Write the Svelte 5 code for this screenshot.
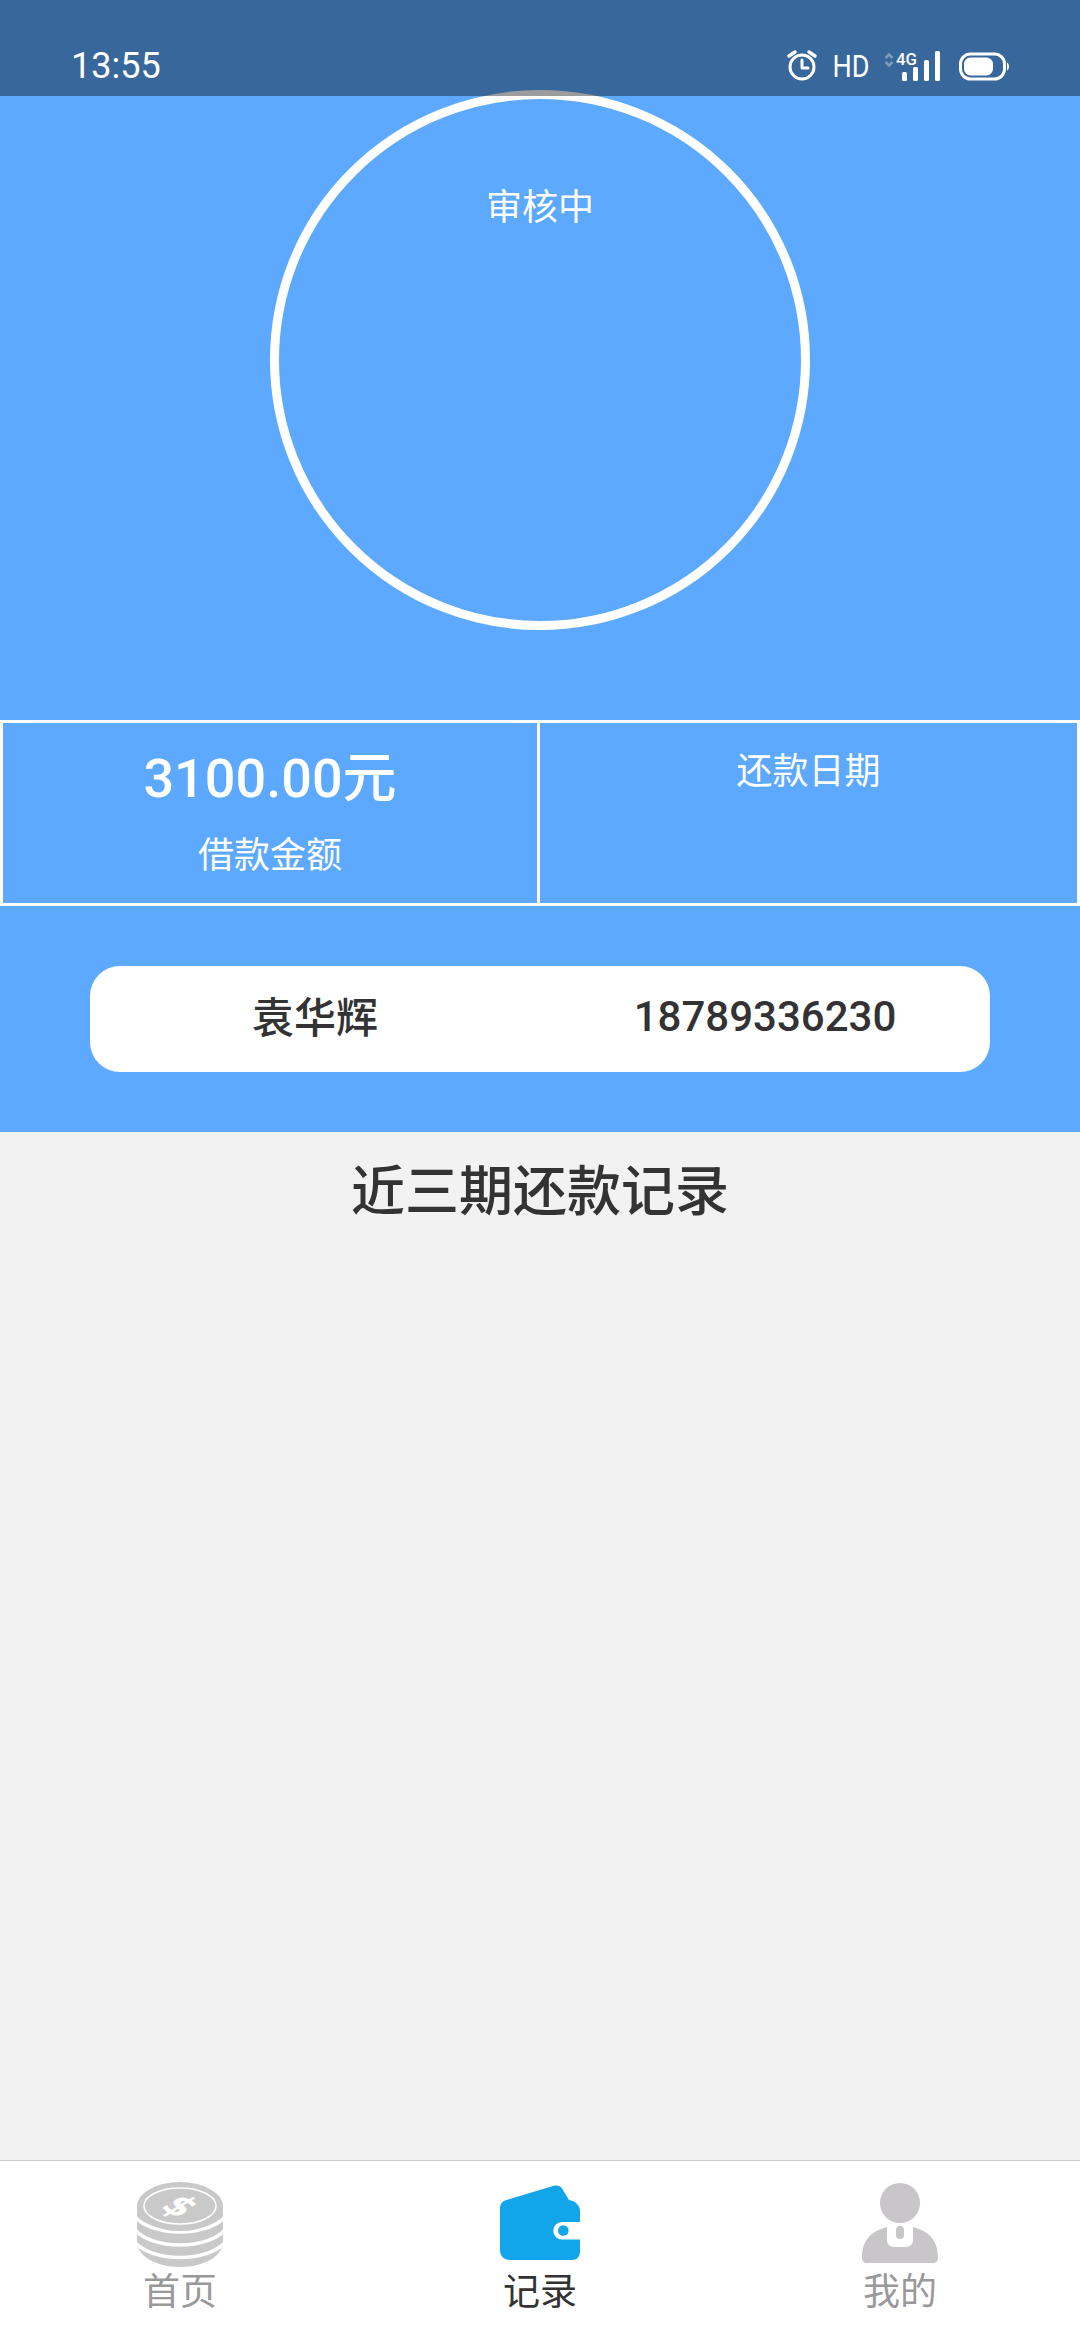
<script>
  const tabs = [
    { key: 'home', label: '首页' },
    { key: 'record', label: '记录', active: true },
    { key: 'mine', label: '我的' }
  ];
</script>

<div class="page">
  <header class="status">
    <span class="time">13:55</span>
    <svg class="status-icons" width="232" height="50" viewBox="785 40 232 50" aria-hidden="true">
      <g fill="none" stroke="#fff" stroke-width="3" stroke-linecap="round" stroke-linejoin="round">
        <circle cx="804" cy="67" r="12" />
        <path d="M804 60v8h6" />
        <path d="M791 56l6-4M817 56l-6-4" stroke-width="3.5" />
      </g>
      <text x="834.5" y="77" class="hd" textLength="37" lengthAdjust="spacingAndGlyphs">HD</text>
      <path d="M887.500 58 891 54.500 894.500 58M887.500 62 891 65.500 894.500 62" fill="none" stroke="#fff" stroke-width="2.5" opacity="0.35" />
      <text x="898" y="65" class="g4" textLength="21" lengthAdjust="spacingAndGlyphs">4G</text>
      <g fill="#fff">
        <rect x="904" y="72" width="5" height="9" rx="1.500" />
        <rect x="915" y="67" width="5" height="14" rx="1.500" />
        <rect x="926" y="60" width="5" height="21" rx="1.500" />
        <rect x="937" y="51" width="5" height="30" rx="1.500" />
      </g>
      <rect x="962.500" y="54" width="44" height="25" rx="10" fill="none" stroke="#fff" stroke-width="3" />
      <rect x="966" y="57.500" width="29" height="18" rx="6.500" fill="#fff" />
      <path d="M1009 62.500c1.500 1 2 2.500 2 4s-.5 3-2 4z" fill="#fff" />
    </svg>
  </header>

  <section class="hero">
    <div class="ring"><span>审核中</span></div>

    <div class="stats">
      <div class="cell">
        <strong>3100.00元</strong>
        <span>借款金额</span>
      </div>
      <div class="cell date">
        <span>还款日期</span>
      </div>
    </div>

    <div class="person">
      <span class="name">袁华辉</span>
      <span>18789336230</span>
    </div>
  </section>

  <main class="records">
    <h2>近三期还款记录</h2>
  </main>

  <nav class="tabs">
    {#each tabs as tab}
      <div class="tab" class:active={tab.active}>
        {#if tab.key === 'home'}
          <svg width="90" height="90" viewBox="0 0 90 90" aria-hidden="true">
            <path d="M2 27v35c0 14 19 25 43 25s43-11 43-25V27z" fill="#c9c9c9" />
            <g fill="none" stroke="#fff" stroke-width="3.500">
              <path d="M0 37C8 46 25 52 45 52S82 46 90 37" />
              <path d="M0 50C8 59 25 65 45 65S82 59 90 50" />
              <path d="M0 62.500C8 71.500 25 77.500 45 77.500S82 71.500 90 62.500" />
            </g>
            <ellipse cx="45" cy="26.500" rx="43" ry="24.500" fill="#c9c9c9" />
            <ellipse cx="45" cy="26" rx="36" ry="18" fill="none" stroke="#fff" stroke-width="1.500" />
            <text x="0" y="0" class="dollar" transform="matrix(.95 .55 -1.100 .68 23.900 27.250)">$</text>
          </svg>
        {:else if tab.key === 'record'}
          <svg width="90" height="90" viewBox="0 0 90 90" aria-hidden="true">
            <path d="M5 28c0-4 2-6.500 5-7.500L58 6c4-1 7-.5 9 2.500L74 20c6 1 11 5 11 11V42H67a8.700 8.700 0 0 0 0 17.500H85V71c0 6-3 9-9 9H15c-6 0-10-4-10-10z" fill="#12a5ea" />
            <circle cx="68.300" cy="50.500" r="5.300" fill="#12a5ea" />
          </svg>
        {:else}
          <svg width="90" height="90" viewBox="0 0 90 90" aria-hidden="true">
            <circle cx="45" cy="23" r="20" fill="#c8c6c8" />
            <path d="M7 78c0-20 11-27 25-31v13c0 4 3 7 7 7h12c4 0 7-3 7-7V47c14 4 25 11 25 31 0 3-2 5-5 5H12c-3 0-5-2-5-5z" fill="#c8c6c8" />
            <rect x="41" y="46" width="8" height="13" rx="4" fill="#c8c6c8" />
          </svg>
        {/if}
        <span>{tab.label}</span>
      </div>
    {/each}
  </nav>
</div>

<style>
  :global(body) {
    margin: 0;
  }

  .page {
    position: relative;
    display: flex;
    flex-direction: column;
    width: 1080px;
    height: 2340px;
    overflow: hidden;
    background: #f2f2f2;
    color: #333;
    font-family: Roboto, "Noto Sans CJK SC", sans-serif;
  }

  .status {
    position: absolute;
    inset: 0 0 auto 0;
    z-index: 2;
    display: flex;
    align-items: flex-start;
    justify-content: space-between;
    height: 96px;
    padding: 40px 65px 0 71px;
    box-sizing: border-box;
    background: rgba(0, 0, 0, 0.39);
    color: #fff;
  }

  .time {
    margin-top: 3px;
    font-size: 36px;
    line-height: 46px;
  }

  .status-icons {
    display: block;
  }

  .hd {
    fill: #fff;
    font-size: 31px;
  }

  .g4 {
    fill: #fff;
    font-size: 17px;
    font-weight: 500;
  }

  .hero {
    flex: none;
    padding: 90px 0 60px;
    background: #5ca9ff;
    color: #fff;
  }

  .ring {
    box-sizing: border-box;
    width: 540px;
    height: 540px;
    margin: 0 auto 90px;
    padding-top: 84px;
    border: 9px solid #fff;
    border-radius: 50%;
    font-size: 36px;
    line-height: 50px;
    text-align: center;
  }

  .stats {
    display: grid;
    grid-template-columns: 1fr 1fr;
    box-sizing: border-box;
    height: 186px;
    border: 3px solid #fff;
    font-size: 36px;
  }

  .cell {
    display: flex;
    flex-direction: column;
    align-items: center;
    padding-top: 24px;
  }

  .cell:first-child {
    border-right: 3px solid #fff;
  }

  .cell strong {
    font-size: 54px;
    font-weight: 500;
    line-height: 64px;
  }

  .cell span {
    margin-top: 20px;
    line-height: 50px;
  }

  .cell.date {
    padding-top: 0;
  }

  .cell.date span {
    margin-top: 24px;
  }

  .person {
    display: grid;
    grid-template-columns: 1fr 1fr;
    align-items: center;
    box-sizing: border-box;
    width: 900px;
    height: 106px;
    margin: 60px auto 0;
    padding-bottom: 6px;
    border-radius: 30px;
    background: #fff;
    color: #333;
    font-size: 42px;
    font-weight: 500;
    text-align: center;
  }

  .person .name {
    margin-bottom: 3px;
  }

  .records {
    flex: 1;
    min-height: 0;
  }

  .records h2 {
    margin: 0;
    padding-top: 25px;
    font-size: 54px;
    font-weight: 500;
    line-height: 72px;
    text-align: center;
  }

  .tabs {
    flex: none;
    display: grid;
    grid-template-columns: repeat(3, 1fr);
    box-sizing: border-box;
    height: 180px;
    border-top: 1px solid #ccc;
    background: #fff;
  }

  .tab {
    display: flex;
    flex-direction: column;
    align-items: center;
    padding-top: 19px;
    color: #999;
    font-size: 37px;
    line-height: 46px;
  }

  .tab svg {
    display: block;
  }

  .tab.active {
    color: #333;
  }

  .dollar {
    fill: #fff;
    font-family: "DejaVu Sans", sans-serif;
    font-size: 30px;
    font-weight: 700;
  }
</style>
